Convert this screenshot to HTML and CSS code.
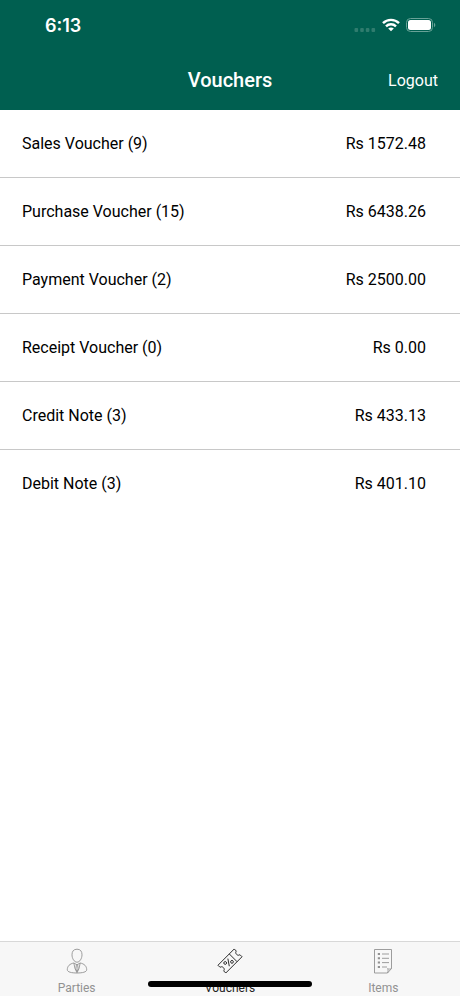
FILE: index.html
```
<!DOCTYPE html>
<html lang="en">
<head>
  <meta charset="UTF-8" />
  <meta name="viewport" content="width=device-width, initial-scale=1.0"/>
  <title>Vouchers</title>
  <link rel="stylesheet" href="styles.css">
</head>
<body>
  <header class="app-header">
    <!-- Status bar -->
    <div class="status-bar">
      <span class="time">6:13</span>
      <div class="status-icons">
        <svg class="signal" width="22" height="4" viewBox="0 0 22 4" fill="#2f7c6e">
          <rect x="0.5" width="3.6" height="4" rx="1"/>
          <rect x="6.2" width="3.6" height="4" rx="1"/>
          <rect x="11.8" width="3.6" height="4" rx="1"/>
          <rect x="17.5" width="3.6" height="4" rx="1"/>
        </svg>
        <svg width="18" height="14" viewBox="0 0 18 14" fill="none" stroke="#fff" stroke-width="2.4">
          <path d="M1 5.2C5.4 .7 12.6 .7 17 5.2"/>
          <path d="M4 8.3C6.8 5.5 11.2 5.5 14 8.3"/>
          <path d="M9 13.3L6.2 10.6C7.8 9.2 10.2 9.2 11.8 10.6Z" fill="#fff" stroke="none"/>
        </svg>
        <svg width="30" height="14" viewBox="0 0 30 14">
          <rect x=".5" y=".5" width="26" height="13" rx="4" fill="none" stroke="#68a297"/>
          <rect x="2" y="2" width="23" height="10" rx="2.5" fill="#fff"/>
          <path d="M28 4.8C29.8 5.6 29.8 8.4 28 9.2Z" fill="#68a297"/>
        </svg>
      </div>
    </div>

    <!-- Title bar -->
    <div class="nav-bar">
      <h1>Vouchers</h1>
      <button type="button" class="logout-btn">Logout</button>
    </div>
  </header>

  <main>
    <ul class="voucher-list">
      <li><span>Sales Voucher (9)</span><span>Rs 1572.48</span></li>
      <li><span>Purchase Voucher (15)</span><span>Rs 6438.26</span></li>
      <li><span>Payment Voucher (2)</span><span>Rs 2500.00</span></li>
      <li><span>Receipt Voucher (0)</span><span>Rs 0.00</span></li>
      <li><span>Credit Note (3)</span><span>Rs 433.13</span></li>
      <li><span>Debit Note (3)</span><span>Rs 401.10</span></li>
    </ul>
  </main>

  <nav class="tab-bar">
    <a href="#" class="tab">
      <svg width="26" height="26" viewBox="0 0 26 26" fill="none" stroke="currentColor" stroke-width=".9">
        <path d="M13 1.2C16.6 1.2 18 3.5 18 6.8C18 10.4 15.8 14.2 13 14.2C10.2 14.2 8 10.4 8 6.8C8 3.5 9.4 1.2 13 1.2Z"/>
        <path d="M9.8 15C5.8 15.8 3.3 18 3.3 21.8C3.3 24 7.5 25 13 25C18.5 25 22.7 24 22.7 21.8C22.7 18 20.2 15.8 16.2 15"/>
        <path d="M9.8 15L11 20.5L13 24.8L15 20.5L16.2 15M9.8 15L13 16.8L16.2 15M12.4 16.8L11.9 21L13 23.5L14.1 21L13.6 16.8"/>
      </svg>
      <span>Parties</span>
    </a>
    <a href="#" class="tab active">
      <svg width="26" height="26" viewBox="0 0 26 26" fill="none" stroke="currentColor" stroke-width=".9">
        <g transform="rotate(-45 13 13)">
          <path d="M1.5 7.5H24.5V10.5C21.6 10.5 21.6 15.5 24.5 15.5V18.5H1.5V15.5C4.4 15.5 4.4 10.5 1.5 10.5Z"/>
          <path d="M17.5 7.5V18.5"/>
          <path d="M13.2 9.8L8.8 16.2"/>
          <circle cx="8.2" cy="11" r="1.4"/>
          <circle cx="13.8" cy="15" r="1.4"/>
        </g>
      </svg>
      <span>Vouchers</span>
    </a>
    <a href="#" class="tab">
      <svg width="26" height="26" viewBox="0 0 26 26" fill="none" stroke="currentColor" stroke-width=".9">
        <path d="M4.5 1.5H21.5V20.5L17.5 25H4.5Z"/>
        <path d="M21.5 20.5C20 21.3 18.8 21.2 17.6 20.6C18.3 22 18.2 23.5 17.5 25"/>
        <path d="M12 6H19M12 10.3H19M12 14.6H19M12 19H17"/>
        <path d="M7.8 6H10M7.8 10.3H10M7.8 14.6H10M7.8 19H10" stroke-width="2"/>
      </svg>
      <span>Items</span>
    </a>
    <div class="home-indicator"></div>
  </nav>
</body>
</html>
```
FILE: styles.css
```
:root {
  --green: #005f50;
  --line: #c8c8c8;
  --tab-bg: #f7f7f7;
  --muted: #929292;
}

* {
  box-sizing: border-box;
}

body {
  margin: 0;
  min-height: 100vh;
  display: flex;
  flex-direction: column;
  background: #fff;
  color: #000;
  font-family: Roboto, sans-serif;
  font-size: 16px;
}

.app-header {
  background: var(--green);
  color: #fff;
}

.status-bar {
  display: flex;
  justify-content: space-between;
  align-items: center;
  height: 50px;
  padding: 0 24px 0 45px;
}

.time {
  font-family: Inter, sans-serif;
  font-size: 18px;
  font-weight: 600;
}

.status-icons {
  display: flex;
  align-items: center;
  gap: 6px;
}

.signal {
  margin-top: 10px;
}

.nav-bar {
  display: grid;
  grid-template-columns: 1fr auto 1fr;
  align-items: center;
  height: 60px;
  padding: 0 22px;
}

h1 {
  grid-column: 2;
  margin: 0;
  font-size: 20px;
  font-weight: 500;
}

.logout-btn {
  justify-self: end;
  padding: 0;
  border: none;
  background: none;
  color: #fff;
  font: inherit;
  cursor: pointer;
}

main {
  flex: 1;
}

.voucher-list {
  margin: 0;
  padding: 0;
  list-style: none;
}

.voucher-list li {
  display: flex;
  justify-content: space-between;
  align-items: center;
  height: 68px;
  padding: 0 34px 0 22px;
  border-bottom: 1px solid var(--line);
}

.voucher-list li:last-child {
  border-bottom-color: transparent;
}

.tab-bar {
  position: relative;
  display: flex;
  height: 55px;
  background: var(--tab-bg);
  border-top: 1px solid #d8d8d8;
}

.tab {
  flex: 1;
  display: flex;
  flex-direction: column;
  align-items: center;
  gap: 6px;
  padding-top: 6px;
  color: var(--muted);
  font-size: 12px;
  line-height: 16px;
  text-decoration: none;
}

.tab.active {
  color: #222;
}

/* iOS home bar, sits over the tabs */
.home-indicator {
  position: absolute;
  left: 50%;
  bottom: 9px;
  width: 164px;
  height: 6px;
  border-radius: 3px;
  background: #000;
  transform: translateX(-50%);
}
```
